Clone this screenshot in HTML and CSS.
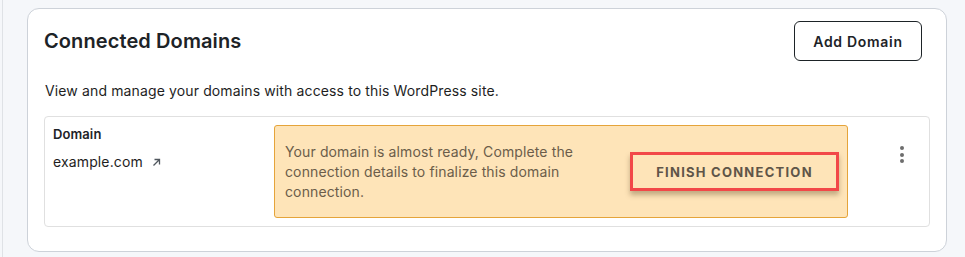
FILE: index.html
```html
<!DOCTYPE html>
<html>
<head>
<meta charset="utf-8">
<link rel="stylesheet" href="styles.css">
</head>
<body>
<div class="page">
  <section class="card">
    <div class="card-header">
      <h2 class="title">Connected Domains</h2>
      <button class="btn-outline">Add Domain</button>
    </div>
    <p class="desc">View and manage your domains with access to this WordPress site.</p>
    <div class="domain-row">
      <div class="domain-col">
        <div class="label">Domain</div>
        <div class="domain-link">example.com <svg class="ext" width="11" height="11" viewBox="0 0 11 11"><path d="M2.5 8.5 L8.5 2.5 M3.5 2.5 H8.5 V7.5" fill="none" stroke="#50575e" stroke-width="1.3"/></svg></div>
      </div>
      <div class="notice">
        <p class="notice-text">Your domain is almost ready, Complete the connection details to finalize this domain connection.</p>
        <button class="btn-finish">FINISH CONNECTION</button>
      </div>
      <div class="kebab"><span></span><span></span><span></span></div>
    </div>
  </section>
</div>
</body>
</html>
```

FILE: styles.css
```css
* { box-sizing: border-box; }
html, body { margin: 0; padding: 0; }
body {
  background: #f5f7fa;
  font-family: Inter, "Noto Sans", sans-serif;
  color: #1e1e1e;
  width: 965px;
  height: 257px;
  overflow: hidden;
}
.page {
  margin-left: 2px;
  border-left: 1px solid #dfe2e6;
  padding: 8px 18px 0 24px;
  height: 257px;
}
.card {
  background: #fff;
  border: 1px solid #cdd2d9;
  border-radius: 12px;
  padding: 12px 16px 24px 16px;
  width: 920px;
}
.card-header {
  display: flex;
  justify-content: space-between;
  align-items: center;
  height: 40px;
}
.title {
  margin: 0;
  font-size: 20px;
  font-weight: 600;
  letter-spacing: 0.1px;
  color: #1d2327;
}
.btn-outline {
  width: 128px;
  height: 40px;
  margin-right: 8px;
  background: #fff;
  border: 1px solid #1d2327;
  border-radius: 6px;
  font-family: Inter, sans-serif;
  font-size: 14px;
  font-weight: 600;
  color: #1d2327;
  letter-spacing: 0.7px;
}
.desc {
  margin: 20px 0 15px 1px;
  font-size: 14px;
  line-height: 20px;
  letter-spacing: 0.13px;
  color: #1e1e1e;
}
.domain-row {
  display: flex;
  border: 1px solid #e0e0e0;
  border-radius: 4px;
  padding: 8px;
  height: 111px;
}
.domain-col {
  width: 221px;
}
.label {
  font-size: 13px;
  font-weight: 600;
  line-height: 18px;
  letter-spacing: 0.1px;
  color: #1d2327;
}
.domain-link {
  margin-top: 9px;
  font-size: 14px;
  line-height: 20px;
  letter-spacing: 0.13px;
  color: #1e1e1e;
}
.ext { margin-left: 4px; vertical-align: -1px; }
.notice {
  display: flex;
  align-items: center;
  width: 574px;
  height: 93px;
  background: #fee4b8;
  border: 1px solid #e5a43a;
  border-radius: 3px;
  padding: 0 8px 0 10px;
}
.notice-text {
  margin: 0;
  flex: 1;
  padding-right: 40px;
  font-size: 14px;
  line-height: 20px;
  letter-spacing: 0.12px;
  color: #6b5d4a;
}
.btn-finish {
  width: 209px;
  height: 39px;
  background: transparent;
  border: 3px solid #f24848;
  box-shadow: 0 4px 5px rgba(80, 60, 30, 0.35);
  font-family: Inter, sans-serif;
  font-size: 13px;
  font-weight: 700;
  letter-spacing: 1.25px;
  color: #5f5548;
}
.kebab {
  display: flex;
  flex-direction: column;
  gap: 2.5px;
  margin: 21px 0 0 52px;
}
.kebab span {
  width: 4px;
  height: 4px;
  border-radius: 50%;
  background: #6d6d6d;
}
```
